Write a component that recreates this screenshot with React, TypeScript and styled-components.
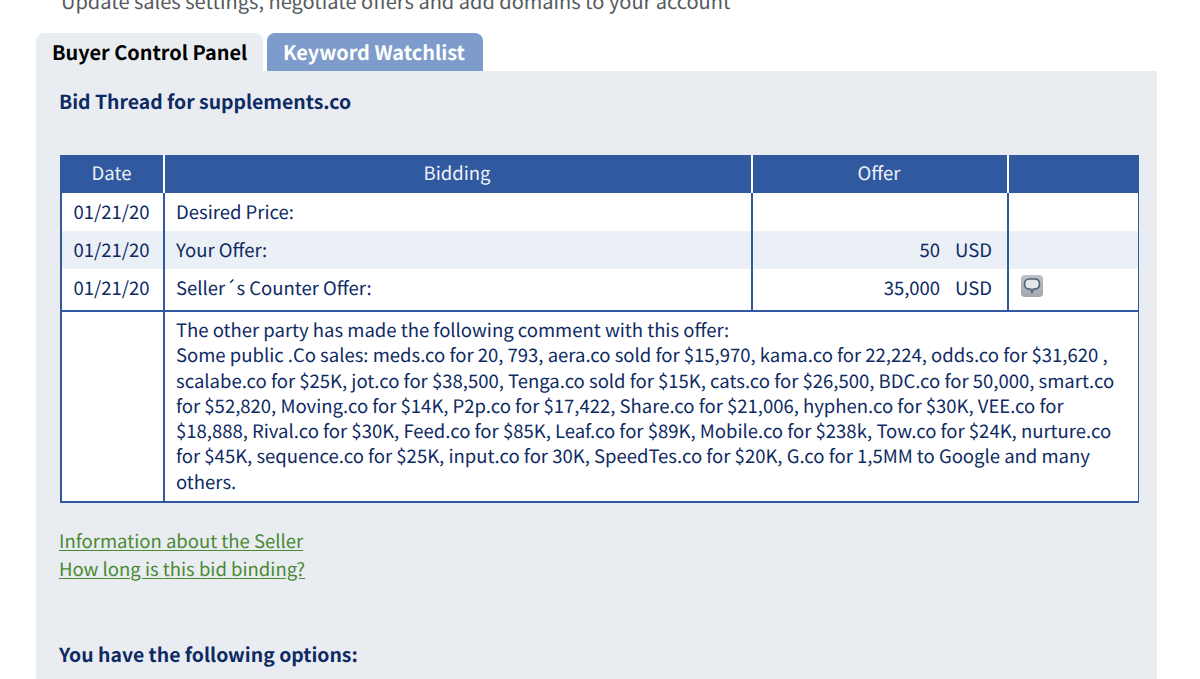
import React from "react";
import styled, { createGlobalStyle } from "styled-components";

const Global = createGlobalStyle`
  html, body { margin: 0; padding: 0; height: 679px; overflow: hidden; background: #fff; }
  body {
    font-family: "Noto Sans CJK SC", "Noto Sans", sans-serif;
    font-size: 18.5px;
    color: #0e2a63;
    text-rendering: geometricPrecision;
  }
`;
const Page = styled.div`
  height: 679px;
  overflow: hidden;
  padding: 0 43px 0 36px;
`;
const Intro = styled.p`
  margin: -14px 0 0 25px;
  height: 47px;
  line-height: 30px;
  font-size: 20px;
  color: #555b60;
`;
const Tabs = styled.div`
  display: flex;
  gap: 4px;
  height: 38px;
`;
const Tab = styled.div<{ $active?: boolean }>`
  height: 38px;
  padding-left: 16px;
  width: ${(p) => (p.$active ? 227 : 216)}px;
  box-sizing: border-box;
  border-radius: 8px 8px 0 0;
  line-height: 38px;
  font-size: 19.9px;
  font-weight: 700;
  white-space: nowrap;
  background: ${(p) => (p.$active ? "#e9ecf1" : "#7e9ccb")};
  color: ${(p) => (p.$active ? "#000" : "#fff")};
`;
const Panel = styled.div`
  background: #e9ecf1;
  height: 640px;
  padding: 15px 18px 0 23px;
  box-sizing: border-box;
`;
const Title = styled.h2`
  margin: 0;
  height: 69px;
  line-height: 30px;
  font-size: 19.4px;
  font-weight: 600;
  color: #0e2a63;
`;
const Table = styled.table`
  width: 1079px;
  margin-left: 1px;
  table-layout: fixed;
  border-collapse: separate;
  border-spacing: 0;
  background: #fff;
  border: solid #30599f;
  border-width: 0 1px 2px 2px;
  box-sizing: border-box;
`;
const Col = styled.col<{ $w: number }>`
  width: ${(p) => p.$w}px;
`;
const Th = styled.th<{ $last?: boolean }>`
  height: 38px;
  padding: 0 2px 2px 0;
  box-sizing: border-box;
  background: #30599f;
  color: #eef2f8;
  font-weight: 400;
  font-size: 18.5px;
  text-align: center;
  border-right: ${(p) => (p.$last ? "0" : "2px solid #fff")};
`;
const Td = styled.td<{ $tint?: boolean; $right?: boolean; $center?: boolean; $last?: boolean; $bottom?: boolean }>`
  height: ${(p) => (p.$bottom ? 43 : 38)}px;
  box-sizing: border-box;
  padding-top: 0;
  padding-right: ${(p) => (p.$right ? 15 : p.$center ? 2 : 0)}px;
  padding-bottom: ${(p) => (p.$bottom ? 3 : 1)}px;
  padding-left: ${(p) => (p.$center ? 0 : p.$last ? 12 : 11)}px;
  background: ${(p) => (p.$tint ? "#ebeff6" : "#fff")};
  text-align: ${(p) => (p.$right ? "right" : p.$center ? "center" : "left")};
  color: #0e2a63;
  font-size: 18.5px;
  line-height: 24px;
  border-right: ${(p) => (p.$last ? "0" : "2px solid #30599f")};
  border-bottom: ${(p) => (p.$bottom ? "2px solid #30599f" : "0")};
  white-space: nowrap;
`;
const Comment = styled.td<{ $empty?: boolean }>`
  padding: 6px 16px 6px 11px;
  font-size: 18.5px;
  line-height: 25.3px;
  color: #0e2a63;
  vertical-align: top;
  border-right: ${(p) => (p.$empty ? "2px solid #30599f" : "0")};
`;
const Usd = styled.span`
  margin-left: 15px;
`;
const IconButton = styled.span`
  display: inline-flex;
  vertical-align: middle;
  width: 22px;
  height: 22px;
  margin-top: -7px;
  border-radius: 4px;
  background: linear-gradient(#bcbfc4, #a3a7ad);
  align-items: center;
  justify-content: center;
`;
const Links = styled.div`
  margin-top: 24px;
  display: flex;
  flex-direction: column;
  align-items: flex-start;
`;
const Link = styled.a`
  font-size: 18.5px;
  line-height: 28px;
  color: #4a8a34;
  text-decoration: underline;
  text-underline-offset: 2px;
`;
const Options = styled.h3`
  margin: 56px 0 0;
  font-size: 19.4px;
  line-height: 30px;
  font-weight: 600;
  color: #0e2a63;
`;

const CommentIcon = () => (
  <svg width="20" height="18" viewBox="0 0 20 18" fill="none">
    <path
      d="M7.500 2h5c3 0 5 2 5 5s-2 5-5 5h-1.300L10 15.500 8.800 12H7.500c-3 0-5-2-5-5s2-5 5-5z"
      fill="#e4e7eb"
      stroke="#4e6078"
      strokeWidth="1.600"
      strokeLinejoin="round"
    />
  </svg>
);

export default function App() {
  return (
    <Page>
      <Global />
      <Intro>Update sales settings, negotiate offers and add domains to your account</Intro>
      <Tabs>
        <Tab $active>Buyer Control Panel</Tab>
        <Tab>Keyword Watchlist</Tab>
      </Tabs>
      <Panel>
        <Title>Bid Thread for supplements.co</Title>
        <Table>
          <colgroup>
            <Col $w={103} />
            <Col $w={588} />
            <Col $w={256} />
            <Col $w={129} />
          </colgroup>
          <thead>
            <tr>
              <Th>Date</Th>
              <Th>Bidding</Th>
              <Th>Offer</Th>
              <Th $last />
            </tr>
          </thead>
          <tbody>
            <tr>
              <Td $center>01/21/20</Td>
              <Td>Desired Price:</Td>
              <Td $right />
              <Td $last />
            </tr>
            <tr>
              <Td $center $tint>01/21/20</Td>
              <Td $tint>Your Offer:</Td>
              <Td $right $tint>50<Usd>USD</Usd></Td>
              <Td $last $tint />
            </tr>
            <tr>
              <Td $center $bottom>01/21/20</Td>
              <Td $bottom>Seller´s Counter Offer:</Td>
              <Td $right $bottom>35,000<Usd>USD</Usd></Td>
              <Td $last $bottom>
                <IconButton><CommentIcon /></IconButton>
              </Td>
            </tr>
            <tr>
              <Comment $empty />
              <Comment colSpan={3}>
                The other party has made the following comment with this offer:
                <br />
                Some public .Co sales: meds.co for 20, 793, aera.co sold for $15,970, kama.co for 22,224, odds.co for $31,620 , scalabe.co for $25K, jot.co for $38,500, Tenga.co sold for $15K, cats.co for $26,500, BDC.co for 50,000, smart.co for $52,820, Moving.co for $14K, P2p.co for $17,422, Share.co for $21,006, hyphen.co for $30K, VEE.co for $18,888, Rival.co for $30K, Feed.co for $85K, Leaf.co for $89K, Mobile.co for $238k, Tow.co for $24K, nurture.co for $45K, sequence.co for $25K, input.co for 30K, SpeedTes.co for $20K, G.co for 1,5MM to Google and many others.
              </Comment>
            </tr>
          </tbody>
        </Table>
        <Links>
          <Link href="#">Information about the Seller</Link>
          <Link href="#">How long is this bid binding?</Link>
        </Links>
        <Options>You have the following options:</Options>
      </Panel>
    </Page>
  );
}
